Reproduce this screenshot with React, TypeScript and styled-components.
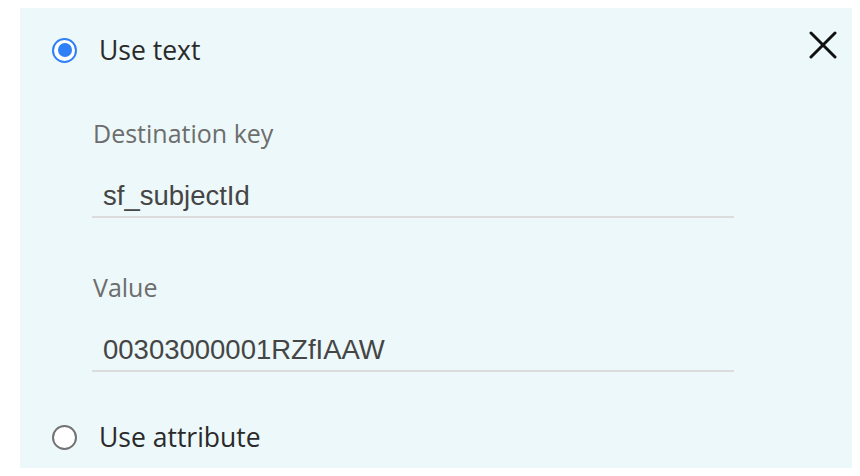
import React from "react";
import styled, { createGlobalStyle } from "styled-components";

const GlobalStyle = createGlobalStyle`
  html, body {
    margin: 0;
    padding: 0;
    background: #ffffff;
  }
  body {
    font-family: "Open Sans", "Noto Sans", sans-serif;
  }
`;

const Page = styled.div`
  padding: 8px 8px 8px 20px;
`;

const Panel = styled.div`
  width: 832px;
  height: 460px;
  box-sizing: border-box;
  background: #ecf8f9;
  padding: 20px 15px 9px 32px;
  display: flex;
  flex-direction: column;
`;

const OptionRow = styled.label<{ $gap?: number }>`
  display: flex;
  align-items: center;
  height: 44px;
  margin-top: ${(p) => p.$gap ?? 0}px;
  cursor: pointer;
`;

const Radio = styled.span<{ $checked?: boolean }>`
  position: relative;
  flex: none;
  width: 25px;
  height: 25px;
  box-sizing: border-box;
  border-radius: 50%;
  background: #ffffff;
  border: 2px solid ${(p) => (p.$checked ? "#2f7ff6" : "#727272")};

  &::after {
    content: "";
    display: ${(p) => (p.$checked ? "block" : "none")};
    position: absolute;
    left: 3.5px;
    top: 3.5px;
    width: 14px;
    height: 14px;
    border-radius: 50%;
    background: #2f7ff6;
  }
`;

const OptionText = styled.span`
  margin-left: 22px;
  font-size: 26.5px;
  line-height: 44px;
  color: #2a2a2a;
`;

const CloseButton = styled.button`
  margin-left: auto;
  align-self: flex-start;
  margin-top: 3px;
  padding: 0;
  width: 28px;
  height: 28px;
  border: none;
  background: transparent;
  cursor: pointer;
  display: flex;

  svg {
    display: block;
  }
`;

const Fields = styled.div`
  margin: 46px 0 0 40px;
  width: 642px;
  display: flex;
  flex-direction: column;
`;

const Field = styled.div<{ $gap?: number }>`
  margin-top: ${(p) => p.$gap ?? 0}px;
  display: flex;
  flex-direction: column;
`;

const FieldLabel = styled.span`
  font-size: 25px;
  line-height: 30px;
  color: #6d6d6d;
  padding-left: 1px;
`;

const FieldInput = styled.div`
  margin-top: 31px;
  padding: 0 0 3px 11px;
  font-family: "Liberation Sans", Arial, sans-serif;
  font-size: 27.5px;
  line-height: 34px;
  color: #454545;
  border-bottom: 2px solid #dcdcdc;
`;

const CloseIcon = () => (
  <svg width="28" height="28" viewBox="0 0 28 28">
    <path
      d="M2 2 L26 26 M26 2 L2 26"
      stroke="#111111"
      strokeWidth="3"
      strokeLinecap="round"
      fill="none"
    />
  </svg>
);

const fields = [
  { label: "Destination key", value: "sf_subjectId" },
  { label: "Value", value: "00303000001RZfIAAW" },
];

export default function App() {
  return (
    <>
      <GlobalStyle />
      <Page>
        <Panel>
          <OptionRow>
            <Radio $checked />
            <OptionText>Use text</OptionText>
            <CloseButton aria-label="Close">
              <CloseIcon />
            </CloseButton>
          </OptionRow>

          <Fields>
            {fields.map((f, i) => (
              <Field key={f.label} $gap={i === 0 ? 0 : 54}>
                <FieldLabel>{f.label}</FieldLabel>
                <FieldInput>{f.value}</FieldInput>
              </Field>
            ))}
          </Fields>

          <OptionRow $gap={43}>
            <Radio />
            <OptionText>Use attribute</OptionText>
          </OptionRow>
        </Panel>
      </Page>
    </>
  );
}
